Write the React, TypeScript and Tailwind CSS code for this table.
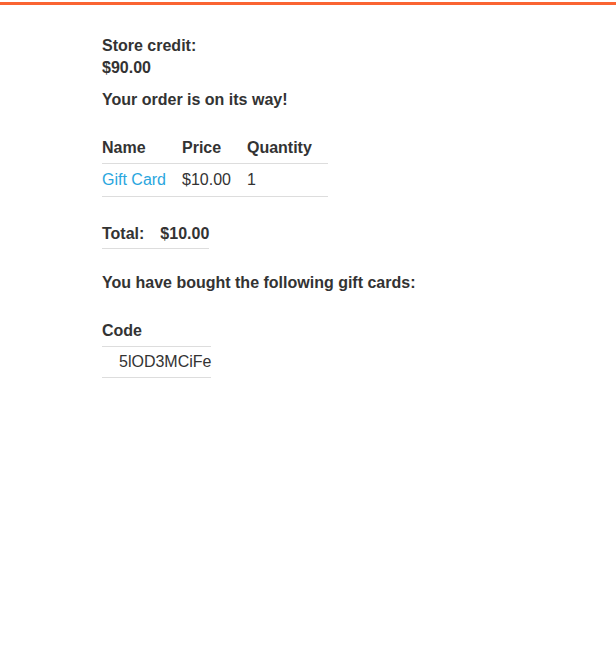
export default function App() {
  const items = [{ name: "Gift Card", price: "$10.00", quantity: 1 }];
  const codes = ["5lOD3MCiFe"];

  return (
    <div className="min-h-[670px] bg-white text-[16px] leading-[22px] text-[#333]" style={{ fontFamily: '"Liberation Sans", Arial, sans-serif' }}>
      <div className="mt-[2px] h-[3px] bg-[#fa6432]" />
      <div className="pl-[102px] pt-[30px]">
        <div className="font-bold">
          <div>Store credit:</div>
          <div>$90.00</div>
        </div>
        <p className="mt-[10px] font-bold">Your order is on its way!</p>

        <table className="mt-[20px] border-collapse text-left">
          <thead>
            <tr>
              <th className="pt-[6px] pb-[4px] pr-4 font-bold">Name</th>
              <th className="pt-[6px] pb-[4px] pr-4 font-bold">Price</th>
              <th className="pt-[6px] pb-[4px] pr-4 font-bold">Quantity</th>
            </tr>
          </thead>
          <tbody>
            {items.map((item, i) => (
              <tr key={i} className="border-y border-[#ddd]">
                <td className="py-[5px] pr-4">
                  <a href="#" className="text-[#2aa6de]">{item.name}</a>
                </td>
                <td className="py-[5px] pr-4">{item.price}</td>
                <td className="py-[5px] pr-4">{item.quantity}</td>
              </tr>
            ))}
          </tbody>
        </table>

        <table className="mt-[20px] border-collapse text-left">
          <tbody>
            <tr className="border-b border-[#ddd] font-bold">
              <td className="pt-[6px] pb-[3px] pr-4">Total:</td>
              <td className="pt-[6px] pb-[3px]">$10.00</td>
            </tr>
          </tbody>
        </table>

        <p className="mt-[23px] font-bold">You have bought the following gift cards:</p>

        <table className="mt-[20px] border-collapse text-left">
          <thead>
            <tr>
              <th className="pt-[6px] pb-[4px] font-bold">Code</th>
            </tr>
          </thead>
          <tbody>
            {codes.map((code) => (
              <tr key={code} className="border-y border-[#ddd]">
                <td className="py-[4px] pl-[17px]">{code}</td>
              </tr>
            ))}
          </tbody>
        </table>
      </div>
    </div>
  );
}
